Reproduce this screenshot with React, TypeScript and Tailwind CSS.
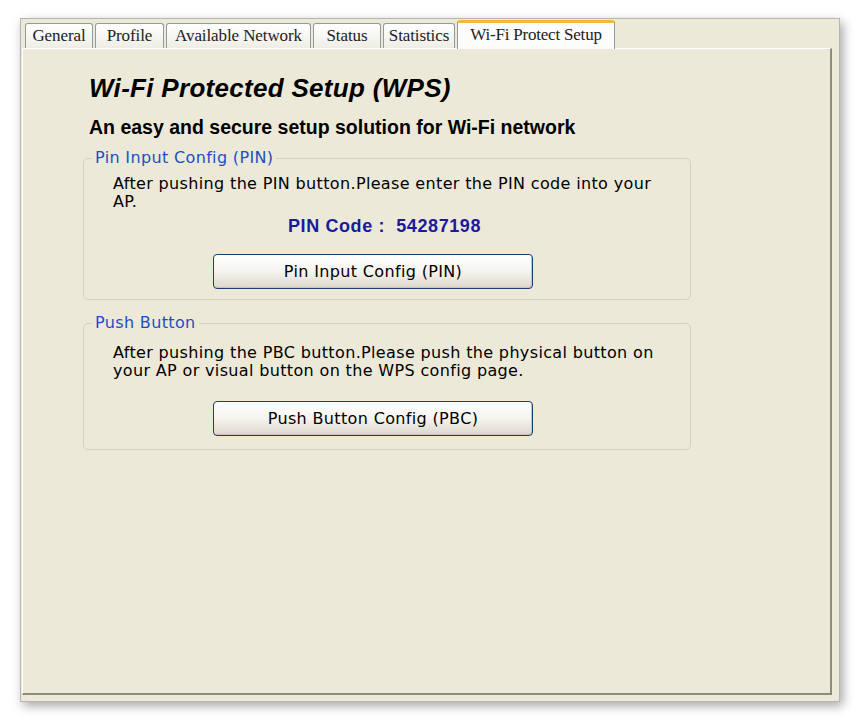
import React from "react";

const TABS = [
  { label: "General", w: "w-[68px]" },
  { label: "Profile", w: "w-[69px]" },
  { label: "Available Network", w: "w-[145px]" },
  { label: "Status", w: "w-[68px]" },
  { label: "Statistics", w: "w-[72px]" },
];

const body = "font-['DejaVu_Sans',sans-serif] text-[16px] tracking-[0.35px] text-black";

function XpButton({ children }: { children: React.ReactNode }) {
  return (
    <button className="w-[320px] h-[35px] rounded-[4px] border border-[#1c3f6e] bg-gradient-to-b from-white via-[#f5f4ee] to-[#dcd8cc] shadow-[inset_-1px_-1px_0_#c9c3b4] font-['DejaVu_Sans',sans-serif] text-[16px] tracking-[0.35px] text-black">
      {children}
    </button>
  );
}

function GroupBox({ title, children, className }: { title: string; children: React.ReactNode; className?: string }) {
  return (
    <fieldset className={`w-[608px] rounded-[5px] border border-[#d3d0c0] ${className ?? ""}`}>
      <legend className="ml-[8px] px-[3px] font-['DejaVu_Sans',sans-serif] text-[16px] tracking-[0.35px] leading-[18px] text-[#1d4fc4]">{title}</legend>
      <div className="pl-[29px]">{children}</div>
    </fieldset>
  );
}

export default function App() {
  return (
    <div className="w-[861px] h-[727px] bg-white pt-[18px] pl-[20px]">
      <div className="w-[820px] h-[684px] bg-[#ece9d8] border border-[#b9b7ad] shadow-[3px_4px_10px_rgba(0,0,0,0.35)] flex flex-col">
        {/* tab strip */}
        <div className="h-[29px] flex items-end pl-[4px] gap-[2px]">
          {TABS.map((t) => (
            <div
              key={t.label}
              className={`${t.w} h-[25px] rounded-t-[3px] border border-b-0 border-[#919b9c] bg-gradient-to-b from-white to-[#eeede5] flex items-center justify-center font-['Liberation_Serif',serif] text-[17px] text-[#222] tracking-[-0.1px]`}
            >
              {t.label}
            </div>
          ))}
          <div className="w-[158px] h-[29px] -mb-[1px] z-10 rounded-t-[3px] border border-b-0 border-[#919b9c] border-t-[3px] border-t-[#f5b73a] bg-[#fcfcfa] flex items-center justify-center pb-[2px] font-['Liberation_Serif',serif] text-[17px] text-[#222] tracking-[-0.2px]">
            Wi-Fi Protect Setup
          </div>
        </div>

        {/* panel */}
        <div className="ml-[1px] mr-[7px] h-[647px] border-t border-l border-t-white border-l-white border-r-2 border-b-2 border-r-[#8d8a7e] border-b-[#8d8a7e] pl-[60px] pt-[24px]">
          <h1 className="ml-[6px] font-['Liberation_Sans',sans-serif] font-bold italic text-[26px] leading-[30px] tracking-[0.3px] text-black">
            Wi-Fi Protected Setup (WPS)
          </h1>
          <p className="ml-[6px] mt-[13px] font-['Liberation_Sans',sans-serif] font-bold text-[19.5px] leading-[22px] text-black">
            An easy and secure setup solution for Wi-Fi network
          </p>

          <GroupBox title="Pin Input Config (PIN)" className="mt-[11px] pb-[10px]">
            <p className={`${body} leading-[18px] w-[560px] mt-[8px]`}>
              After pushing the PIN button.Please enter the PIN code into your AP.
            </p>
            <div className="ml-[175px] mt-[4px] font-['Liberation_Sans',sans-serif] font-bold text-[18px] leading-[22px] tracking-[0.6px] text-[#1a1a9c]">
              PIN Code :&nbsp; 54287198
            </div>
            <div className="ml-[100px] mt-[17px]">
              <XpButton>Pin Input Config (PIN)</XpButton>
            </div>
          </GroupBox>

          <GroupBox title="Push Button" className="mt-[14px] pb-[13px]">
            <p className={`${body} leading-[18px] w-[560px] mt-[12px]`}>
              After pushing the PBC button.Please push the physical button on your AP or visual button on the WPS config page.
            </p>
            <div className="ml-[100px] mt-[21px]">
              <XpButton>Push Button Config (PBC)</XpButton>
            </div>
          </GroupBox>
        </div>
      </div>
    </div>
  );
}
